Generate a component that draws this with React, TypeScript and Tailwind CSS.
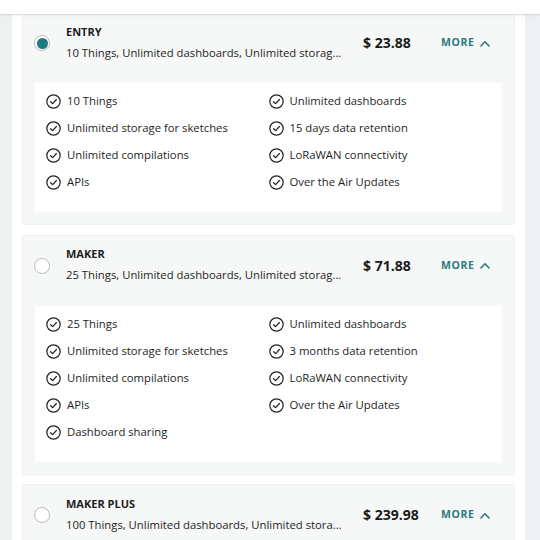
import React from "react";

type Plan = {
  name: string;
  desc: string;
  price: string;
  selected?: boolean;
  features?: [string[], string[]];
};

const plans: Plan[] = [
  {
    name: "ENTRY",
    desc: "10 Things, Unlimited dashboards, Unlimited storag...",
    price: "$ 23.88",
    selected: true,
    features: [
      ["10 Things", "Unlimited storage for sketches", "Unlimited compilations", "APIs"],
      ["Unlimited dashboards", "15 days data retention", "LoRaWAN connectivity", "Over the Air Updates"],
    ],
  },
  {
    name: "MAKER",
    desc: "25 Things, Unlimited dashboards, Unlimited storag...",
    price: "$ 71.88",
    features: [
      ["25 Things", "Unlimited storage for sketches", "Unlimited compilations", "APIs", "Dashboard sharing"],
      ["Unlimited dashboards", "3 months data retention", "LoRaWAN connectivity", "Over the Air Updates"],
    ],
  },
  {
    name: "MAKER PLUS",
    desc: "100 Things, Unlimited dashboards, Unlimited stora...",
    price: "$ 239.98",
    features: [
      ["100 Things", "Unlimited storage for sketches", "Unlimited compilations", "APIs", "Dashboard sharing"],
      ["Unlimited dashboards", "1 year data retention", "LoRaWAN connectivity", "Over the Air Updates"],
    ],
  },
];

function CheckIcon() {
  return (
    <svg width="15" height="15" viewBox="0 0 16 16" fill="none" className="shrink-0">
      <circle cx="8" cy="8" r="7.1" stroke="#222" strokeWidth="1.3" />
      <path d="M4.9 8.2 L7.1 10.3 L11.1 5.9" stroke="#222" strokeWidth="1.3" strokeLinecap="round" strokeLinejoin="round" />
    </svg>
  );
}

function Radio({ selected }: { selected?: boolean }) {
  return (
    <div className="w-[16px] h-[16px] rounded-full border border-[#b9bdc0] bg-white flex items-center justify-center shrink-0">
      {selected && <div className="w-[11px] h-[11px] rounded-full bg-[#1c7a80]" />}
    </div>
  );
}

function Feature({ text }: { text: string }) {
  return (
    <div className="h-[27px] flex items-center gap-[6px]">
      <CheckIcon />
      <span className="text-[11.3px] text-[#1e1e1e]">{text}</span>
    </div>
  );
}

function Card({ plan }: { plan: Plan }) {
  return (
    <div className="bg-[#f6f7f7] shadow-[0_0_0_1px_#eef0f0] rounded-[2px] pb-[12px]">
      <div className="h-[60px] flex items-center pl-[11px]">
        <Radio selected={plan.selected} />
        <div className="ml-[16px] w-[275px] flex flex-col -mt-[1px]">
          <div className="text-[11px] font-bold leading-[16px] text-[#1e1e1e]">{plan.name}</div>
          <div className="mt-[4px] text-[11.3px] leading-[18px] text-[#1e1e1e] whitespace-nowrap overflow-hidden">{plan.desc}</div>
        </div>
        <div className="ml-[22px] w-[78px] text-[14px] font-bold text-[#1a1a1a] leading-[20px]">{plan.price}</div>
        <div className="flex items-center gap-[5px] text-[10.5px] font-bold tracking-[0.06em] text-[#2a7a7f]">
          <span>MORE</span>
          <svg width="10" height="7" viewBox="0 0 10 7" fill="none">
            <path d="M1 6 L5 1.8 L9 6" stroke="#2a7a7f" strokeWidth="1.6" strokeLinecap="round" strokeLinejoin="round" />
          </svg>
        </div>
      </div>
      {plan.features && (
        <div className="mt-[10px] mx-[12px] bg-white px-[11px] pt-[5px] pb-[16px] grid grid-cols-2">
          <div className="flex flex-col">
            {plan.features[0].map((f) => (
              <Feature key={f} text={f} />
            ))}
          </div>
          <div className="flex flex-col">
            {plan.features[1].map((f) => (
              <Feature key={f} text={f} />
            ))}
          </div>
        </div>
      )}
    </div>
  );
}

export default function App() {
  return (
    <div
      className="w-[540px] h-[540px] overflow-hidden bg-[#eef1f2]"
      style={{ fontFamily: '"Open Sans", "Noto Sans", sans-serif' }}
    >
      <div className="relative z-10 h-[15px] bg-white border-b border-[#d9dcdd] shadow-[0_1px_2px_rgba(0,0,0,0.05)]" />
      <div className="-mt-[2px] flex">
        <div className="w-[12px] shrink-0" />
        <div className="w-[513px] bg-white px-[11px] flex flex-col gap-[11.5px] pb-[20px]">
          {plans.map((p) => (
            <Card key={p.name} plan={p} />
          ))}
        </div>
      </div>
    </div>
  );
}
